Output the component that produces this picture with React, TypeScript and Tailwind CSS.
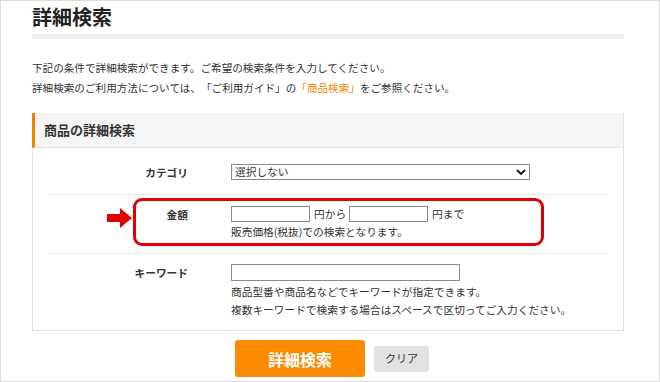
import React from "react";

const font = { fontFamily: '"Noto Sans CJK JP", "Noto Sans", sans-serif' };

function Row({
  label,
  labelPt,
  className,
  children,
}: {
  label: string;
  labelPt: string;
  className: string;
  children: React.ReactNode;
}) {
  return (
    <div className={`flex ${className}`}>
      <div className={`w-[140px] shrink-0 text-right text-[10.7px] font-bold text-[#333] ${labelPt}`}>
        {label}
      </div>
      <div className="ml-[43px] flex-1">{children}</div>
    </div>
  );
}

export default function App() {
  return (
    <div
      className="w-[660px] h-[382px] border border-[#dcdcdc] bg-white overflow-hidden text-[#333] [text-spacing-trim:space-all]"
      style={font}
    >
      <div className="pl-[31px] pr-[35px] pt-[4px]">
        <h1 className="text-[20px] leading-[24px] font-bold text-[#222]">詳細検索</h1>
        <div className="mt-[5px] h-[5px] bg-[#eeeeee]" />

        <div className="mt-[19px] text-[10.6px] leading-[20px] text-[#333]">
          <p>下記の条件で詳細検索ができます。ご希望の検索条件を入力してください。</p>
          <p>
            詳細検索のご利用方法については、「ご利用ガイド」の
            <span className="text-[#f08a00]">「商品検索」</span>
            をご参照ください。
          </p>
        </div>

        {/* section box */}
        <div className="relative mt-[15px] border border-[#e3e3e3]">
          <div className="flex h-[35px] items-center border-b border-[#e3e3e3] border-l-[3px] border-l-[#f08300] -ml-px -mt-px bg-[#f5f5f5] pl-[9px]">
            <span className="text-[13px] font-bold text-[#333]">商品の詳細検索</span>
          </div>

          <div className="px-[15px]">
            <Row label="カテゴリ" labelPt="pt-[1px]" className="pt-[16px] pb-[13px] border-b border-dotted border-[#d8d8d8]">
              <div className="relative w-[299px]">
                <select className="block h-[16px] w-full appearance-none border border-[#8a8a8a] bg-white pl-[3px] text-[10.7px] leading-[14px] text-[#333] outline-none">
                  <option>選択しない</option>
                </select>
                <svg
                  className="pointer-events-none absolute right-[4px] top-[4px]"
                  width="10"
                  height="8"
                  viewBox="0 0 10 8"
                >
                  <path d="M1 2 L5 6 L9 2" fill="none" stroke="#111" strokeWidth="1.8" />
                </svg>
              </div>
            </Row>

            <Row label="金額" labelPt="pt-[1px]" className="relative pt-[11px] pb-[13px] border-b border-dotted border-[#d8d8d8]">
              <div className="flex items-center text-[10.7px] leading-[16px]">
                <input className="h-[16px] w-[79px] border border-[#8a8a8a] bg-white outline-none" />
                <span className="ml-[4px] mr-[3px]">円から</span>
                <input className="h-[16px] w-[79px] border border-[#8a8a8a] bg-white outline-none" />
                <span className="ml-[4px]">円まで</span>
              </div>
              <p className="mt-[2px] text-[10.7px] leading-[16px]">販売価格(税抜)での検索となります。</p>
            </Row>

            <Row label="キーワード" labelPt="pt-[1px]" className="pt-[10px] pb-[11px]">
              <input className="block h-[17px] w-[229px] border border-[#8a8a8a] bg-white outline-none" />
              <div className="mt-[2px] text-[10.7px] leading-[18px]">
                <p>商品型番や商品名などでキーワードが指定できます。</p>
                <p>複数キーワードで検索する場合はスペースで区切ってご入力ください。</p>
              </div>
            </Row>
          </div>

          {/* annotation: red frame + arrow */}
          <div className="pointer-events-none absolute left-[100px] top-[84px] h-[48px] w-[411px] rounded-[9px] border-[3px] border-[#e00000]" />
          <svg
            className="pointer-events-none absolute left-[74px] top-[93px]"
            width="26"
            height="22"
            viewBox="0 0 26 22"
          >
            <path d="M0 7 H13 V1 L25 11 L13 21 V15 H0 Z" fill="#e00000" />
          </svg>
        </div>

        <div className="mt-[9px] flex items-center justify-center gap-[9px] pl-[8px]">
          <button className="h-[37px] w-[130px] rounded-[3px] bg-[#fb8b00] text-[16px] font-bold text-white">
            詳細検索
          </button>
          <button className="h-[26px] w-[55px] rounded-[3px] bg-[#e2e2e2] text-[11px] text-[#333]">
            クリア
          </button>
        </div>
      </div>
    </div>
  );
}
